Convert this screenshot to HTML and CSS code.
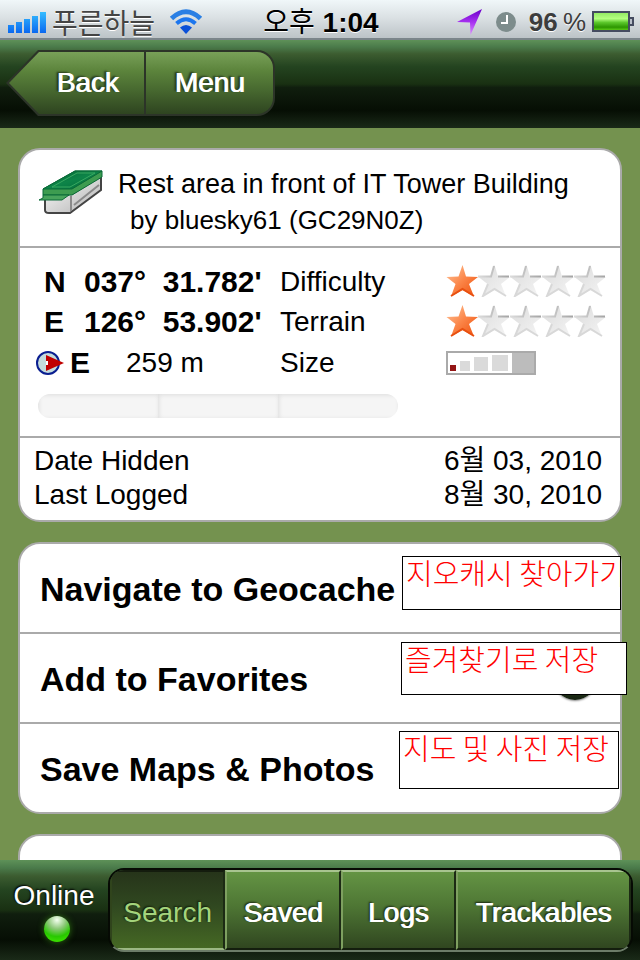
FILE: index.html
```html
<!DOCTYPE html>
<html lang="en">
<head>
    <meta charset="UTF-8">
    <meta name="viewport" content="width=device-width, initial-scale=1.0">
    <title>Geocache Details</title>
    <link rel="stylesheet" href="styles.css">
</head>
<body>

    <!-- shared shapes -->
    <svg class="defs" width="0" height="0" aria-hidden="true">
        <defs>
            <linearGradient id="orange" x1="0" y1="0" x2="1" y2="1">
                <stop offset="0" stop-color="#ffc9a0"/>
                <stop offset="0.5" stop-color="#fb8548"/>
                <stop offset="1" stop-color="#ee4e0a"/>
            </linearGradient>
            <linearGradient id="grey" x1="0" y1="0" x2="1" y2="1">
                <stop offset="0" stop-color="#dadada"/>
                <stop offset="1" stop-color="#f6f6f6"/>
            </linearGradient>
            <linearGradient id="edge" x1="0" y1="0" x2="1" y2="0">
                <stop offset="0" stop-color="#dcdcdc"/>
                <stop offset="1" stop-color="#a4a4a4"/>
            </linearGradient>
            <linearGradient id="blue" x1="0" y1="0" x2="0" y2="1">
                <stop offset="0" stop-color="#36bdff"/>
                <stop offset="1" stop-color="#0a68f0"/>
            </linearGradient>
            <linearGradient id="purple" x1="0" y1="0" x2="0" y2="1">
                <stop offset="0" stop-color="#6a00c8"/>
                <stop offset="0.5" stop-color="#a630f0"/>
                <stop offset="1" stop-color="#dc90ff"/>
            </linearGradient>
            <linearGradient id="power" x1="0" y1="0" x2="0" y2="1">
                <stop offset="0" stop-color="#8fe860"/>
                <stop offset="0.35" stop-color="#b4ff80"/>
                <stop offset="0.55" stop-color="#5cc82c"/>
                <stop offset="0.8" stop-color="#2c9600"/>
                <stop offset="1" stop-color="#6ada20"/>
            </linearGradient>
            <linearGradient id="lid" x1="0" y1="0" x2="1" y2="1">
                <stop offset="0" stop-color="#006030"/>
                <stop offset="0.5" stop-color="#0d8448"/>
                <stop offset="1" stop-color="#006838"/>
            </linearGradient>
            <linearGradient id="plastic" x1="0" y1="0" x2="1" y2="1">
                <stop offset="0" stop-color="#ffffff"/>
                <stop offset="1" stop-color="#b0b0b0"/>
            </linearGradient>
            <symbol id="star-on" viewBox="0 0 32 32">
                <path d="M16.500 0 20 11.500 32 12 23 19 28 31.500 16.500 25 5 31.500 9.500 19 0.500 12 12.500 11.500Z" fill="url(#orange)"/>
                <path d="M28 31 16.500 24 5 31" fill="none" stroke="#e85010" stroke-width="2"/>
            </symbol>
            <symbol id="star-off" viewBox="0 0 32 32">
                <path d="M16.500 0 20 11.500 32 12 23 19 28 31.500 16.500 25 5 31.500 9.500 19 0.500 12 12.500 11.500Z" fill="url(#grey)"/>
                <path d="M0 11.500H13L16 1M20 11.500H31" fill="none" stroke="url(#edge)" stroke-width="2"/>
                <path d="M10 19 5 31 16.500 24 28 31" fill="none" stroke="#d8d8d8" stroke-width="2"/>
            </symbol>
        </defs>
    </svg>

    <div class="status">
        <div class="status-left">
            <svg width="40" height="22" viewBox="0 0 40 22" aria-hidden="true">
                <path d="M0 14h6v8H0zM8 11h6v11H8zM16 8h6v14h-6zM24 5h6v17h-6zM32 1h6v21h-6z" fill="url(#blue)"/>
            </svg>
            <span class="carrier">푸른하늘</span>
            <svg class="wifi" width="34" height="26" viewBox="0 0 34 26" aria-hidden="true">
                <path d="M2.500 9.500Q17 -4 31.500 9.500" fill="none" stroke="#2a7fe4" stroke-width="5"/>
                <path d="M7.500 14.500Q17 6 26.500 14.500" fill="none" stroke="#1c76ee" stroke-width="4"/>
                <path d="M11 18.500Q17 13.500 23 18.500L17 25Z" fill="#0a50d8"/>
            </svg>
        </div>
        <div class="time"><span class="ampm">오후</span> 1:04</div>
        <div class="status-right">
            <svg width="26" height="26" viewBox="0 0 26 26" aria-hidden="true">
                <path d="M25 0 13.500 26 13 13.500 0 13Z" fill="url(#purple)"/>
            </svg>
            <svg width="22" height="22" viewBox="0 0 22 22" aria-hidden="true">
                <circle cx="11" cy="11" r="10" fill="#7d8c8c"/>
                <path d="M12 4v8H6" fill="none" stroke="#fff" stroke-width="2"/>
            </svg>
            <span class="percent">96&thinsp;<span>%</span></span>
            <svg width="42" height="22" viewBox="0 0 42 22" aria-hidden="true">
                <rect x="1" y="1" width="36" height="19" fill="url(#power)" stroke="#454c60" stroke-width="2"/>
                <path d="M38 7h3v7h-3" fill="#b8bec8" stroke="#454c60" stroke-width="2"/>
            </svg>
        </div>
    </div>

    <header class="topbar">
        <button type="button" class="back"><span>Back</span></button>
        <button type="button" class="menu">Menu</button>
    </header>

    <main>
        <section class="card">
            <div class="title">
                <svg class="box" width="66" height="48" viewBox="0 0 66 48" aria-hidden="true">
                    <path d="M7 28V42Q7 45 11 45H32L63 22V8L34 26Z" fill="url(#plastic)" stroke="#444" stroke-width="2"/>
                    <path d="M33 28V43M36 37 61 17" fill="none" stroke="#8a8a8a" stroke-width="2"/>
                    <path d="M5 21 37 3H64V9L34 27H5Z" fill="#3d9c50" stroke="#0b6a38"/>
                    <path d="M5 21 37 3H64L34 21Z" fill="url(#lid)" stroke="#0b6a38"/>
                    <path d="M14 19 39 5H57L32 19Z" fill="none" stroke="#38a860"/>
                    <path d="M5 27H31L24 32H1L5 30Z" fill="#48a45c" stroke="#0b6a38"/>
                </svg>
                <h1>Rest area in front of IT Tower Building <span class="owner">by bluesky61 (GC29N0Z)</span></h1>
            </div>

            <div class="details">
                <div class="coord"><b>N</b><b>037° &nbsp;31.782'</b></div>
                <span>Difficulty</span>
                <div class="stars" role="img" aria-label="1 of 5">
                    <svg><use href="#star-on"/></svg>
                    <svg><use href="#star-off"/></svg>
                    <svg><use href="#star-off"/></svg>
                    <svg><use href="#star-off"/></svg>
                    <svg><use href="#star-off"/></svg>
                </div>

                <div class="coord"><b>E</b><b>126° &nbsp;53.902'</b></div>
                <span>Terrain</span>
                <div class="stars" role="img" aria-label="1 of 5">
                    <svg><use href="#star-on"/></svg>
                    <svg><use href="#star-off"/></svg>
                    <svg><use href="#star-off"/></svg>
                    <svg><use href="#star-off"/></svg>
                    <svg><use href="#star-off"/></svg>
                </div>

                <div class="distance">
                    <svg width="28" height="24" viewBox="0 0 28 24" aria-hidden="true">
                        <circle cx="12" cy="12" r="11" fill="#c4dcdc" stroke="#0a1e90" stroke-width="2"/>
                        <path d="M10 4 28 12 10 20Z" fill="#c00000"/>
                        <path d="M10 10h2v4h-2z" fill="#fff"/>
                    </svg>
                    <b>E</b>
                    <span>259 m</span>
                </div>
                <span>Size</span>
                <svg width="90" height="24" viewBox="0 0 90 24" role="img" aria-label="Micro">
                    <path d="M1 1h88v22H1z" fill="#fff" stroke="#aaa" stroke-width="2"/>
                    <path d="M66 2h22v20H66z" fill="#bcbcbc"/>
                    <path d="M4 14h6v6H4z" fill="#941616"/>
                    <path d="M14 10h10v10H14zM28 6h14v14H28zM46 4h16v16H46z" fill="#dadada"/>
                </svg>

                <div class="slots"><i></i><i></i><i></i></div>
            </div>

            <dl class="dates">
                <dt>Date Hidden</dt>
                <dd>6월 03, 2010</dd>
                <dt>Last Logged</dt>
                <dd>8월 30, 2010</dd>
            </dl>
        </section>

        <section class="card actions">
            <div class="row">
                <a href="#">Navigate to Geocache</a>
                <span class="note note-navigate">지오캐시 찾아가기</span>
            </div>
            <div class="row">
                <a href="#">Add to Favorites</a>
                <span class="knob"></span>
                <span class="note note-favorite">즐겨찾기로 저장</span>
            </div>
            <div class="row">
                <a href="#">Save Maps &amp; Photos</a>
                <span class="note note-save">지도 및 사진 저장</span>
            </div>
        </section>

        <section class="card next"></section>
    </main>

    <footer class="bottombar">
        <div class="online">
            Online
            <span class="led"></span>
        </div>
        <nav class="tabs">
            <button type="button" class="tab active">Search</button>
            <button type="button" class="tab">Saved</button>
            <button type="button" class="tab">Logs</button>
            <button type="button" class="tab wide">Trackables</button>
        </nav>
    </footer>

</body>
</html>
```

FILE: styles.css
```css
* {
    box-sizing: border-box;
}
body {
    margin: 0;
    height: 100vh;
    display: flex;
    flex-direction: column;
    overflow: hidden;
    font-family: "Liberation Sans", "Noto Sans CJK KR", sans-serif;
    font-size: 28px;
    color: #000;
    background-color: #74924f;
}
svg {
    display: block;
    flex: none;
}
.defs {
    position: absolute;
}
button {
    border: 0;
    padding: 0;
    font: inherit;
    color: #fff;
    text-shadow: inherit;
    cursor: pointer;
}

/* status bar */
.status {
    flex: none;
    height: 40px;
    display: grid;
    grid-template-columns: 1fr auto 1fr;
    align-items: center;
    padding: 0 6px 0 8px;
    background: linear-gradient(#f0f7f9, #d9dfe2 50%, #bcc3c7);
    border-bottom: 2px solid #7b858a;
    text-shadow: 0 1px 0 #fff;
}
.status-left,
.status-right {
    display: flex;
    align-items: center;
}
.status-right {
    justify-content: flex-end;
    gap: 12px;
}
.carrier {
    margin: 0 14px 0 4px;
    color: #444;
}
.time {
    padding-bottom: 4px;
    font-weight: bold;
}
.ampm {
    font-weight: normal;
}
.percent {
    margin-right: -6px;
    font-size: 26px;
    font-weight: bold;
    color: #3c3c3c;
}
.percent span {
    font-weight: normal;
}

/* top bar */
.topbar,
.bottombar {
    flex: none;
    display: flex;
    background: linear-gradient(#5e9158, #4a7a4a 8%, #3c5c30 16%, #244420 30%, #193012 50%, #101e0e 54%, #060e04 80%, #1a2a18);
}
.topbar {
    height: 88px;
    padding: 10px 6px 12px;
    text-shadow: 1px 0 0 #fff, -2px -1px 2px #24351a;
}
.back {
    width: 140px;
    padding: 2px 2px 2px 3px;
    background-color: #2c3428;
    clip-path: polygon(0 50%, 32px 0, 100% 0, 100% 100%, 32px 100%);
}
.back span {
    display: flex;
    align-items: center;
    justify-content: center;
    height: 100%;
    padding-left: 22px;
    background: linear-gradient(#78a058, #5c843c 30%, #486a30 60%, #2e4420);
    clip-path: polygon(0 50%, 30px 0, 100% 0, 100% 100%, 30px 100%);
}
.menu {
    width: 129px;
    border: 2px solid #2c3428;
    border-left: 0;
    border-radius: 0 18px 18px 0;
    background: linear-gradient(#78a058, #5c843c 30%, #486a30 60%, #2e4420);
}

/* cards */
main {
    flex: 1;
    min-height: 0;
    overflow: hidden;
    padding: 20px 18px 0;
}
.card {
    margin-bottom: 20px;
    border: 2px solid #aaa;
    border-radius: 22px;
    background-color: #fff;
}
.title {
    display: flex;
    align-items: flex-start;
    gap: 14px;
    height: 98px;
    padding: 16px 16px 0 18px;
    border-bottom: 2px solid #aaa;
}
.title svg {
    margin-top: 2px;
}
.title h1 {
    margin: 0;
    font-size: 27px;
    font-weight: normal;
    line-height: 36px;
}
.owner {
    display: block;
    padding-left: 12px;
    font-size: 26px;
}
.details {
    display: grid;
    grid-template-columns: 242px 166px 1fr;
    grid-template-rows: 40px 40px 42px;
    align-items: center;
    padding: 14px 14px 18px 18px;
    border-bottom: 2px solid #aaa;
}
.details b {
    font-size: 30px;
}
.coord {
    display: grid;
    grid-template-columns: 40px 1fr;
    padding-left: 6px;
}
.stars {
    display: flex;
    padding-bottom: 2px;
}
.stars svg {
    width: 32px;
    height: 32px;
}
.distance {
    display: flex;
    align-items: center;
    gap: 6px;
}
.distance svg {
    margin-left: -2px;
}
.distance span {
    margin-left: 30px;
}
.slots {
    grid-column: 1 / -1;
    display: flex;
    width: 360px;
    height: 24px;
    margin-top: 10px;
    border-radius: 12px;
    overflow: hidden;
}
.slots i {
    flex: 1;
    background-color: #f5f5f5;
    box-shadow: inset 1px 1px 4px #ddd;
}
.dates {
    display: grid;
    grid-template-columns: 1fr auto;
    margin: 0;
    padding: 6px 18px 8px 14px;
    line-height: 34px;
}
.dates dd {
    margin: 0;
}

/* action rows */
.row {
    position: relative;
    display: flex;
    align-items: center;
    height: 90px;
    padding: 2px 20px 0;
    border-bottom: 2px solid #aaa;
}
.row:last-child {
    height: 88px;
    border-bottom: 0;
}
.row a {
    font-size: 34px;
    font-weight: bold;
    color: #000;
    text-decoration: none;
}
.note {
    position: absolute;
    padding: 0 3px;
    border: 1px solid #000;
    background-color: #fff;
    color: #f00;
    font-family: "Noto Sans CJK KR", sans-serif;
    font-size: 29px;
    font-weight: 300;
    line-height: 30px;
    white-space: nowrap;
}
.note-navigate {
    top: 12px;
    right: -1px;
    width: 219px;
    height: 54px;
    overflow: hidden;
}
.note-favorite {
    top: 8px;
    right: -7px;
    width: 226px;
    height: 53px;
}
.note-save {
    top: 7px;
    right: 1px;
    width: 220px;
    height: 58px;
}
.knob {
    position: absolute;
    top: 22px;
    right: 23px;
    width: 44px;
    height: 44px;
    border-radius: 50%;
    background: linear-gradient(#5c843c, #142010);
    box-shadow: 0 1px 2px #888;
}
.next {
    height: 90px;
}

/* bottom bar */
.bottombar {
    height: 100px;
    padding: 8px 7px 8px 0;
    color: #fff;
}
.online {
    width: 108px;
    padding-top: 12px;
    text-align: center;
    text-shadow: -1px -1px 2px #000;
}
.led {
    display: block;
    width: 26px;
    height: 26px;
    margin: 4px 0 0 44px;
    border-radius: 50%;
    background: radial-gradient(circle at 50% 15%, #f4fff0, #8cc878 35%, #28c800 65%, #48f000);
    box-shadow: 0 0 6px #2c7010;
}
.tabs {
    flex: 1;
    display: flex;
    border: 2px solid #060a04;
    border-bottom-color: #6c7c68;
    border-radius: 16px;
    overflow: hidden;
}
.tab {
    flex: 115;
    padding-top: 6px;
    border-top: 2px solid #a8c490;
    border-left: 2px solid #7ea060;
    border-right: 2px solid #1c2a14;
    border-bottom: 2px solid #141e0e;
    background: linear-gradient(#649444, #4e7634 45%, #304620);
    text-shadow: 1px 0 0 #fff, -1px -1px 2px #182410;
}
.wide {
    flex: 177;
}
.active {
    border-top-color: #141c0e;
    border-left-color: #30441c;
    border-right-color: #1c2a14;
    border-bottom-color: #9cb884;
    background: linear-gradient(#26341a, #304820 45%, #456824);
    color: #a4d47c;
    text-shadow: -1px -1px 2px #101a08;
}
```
